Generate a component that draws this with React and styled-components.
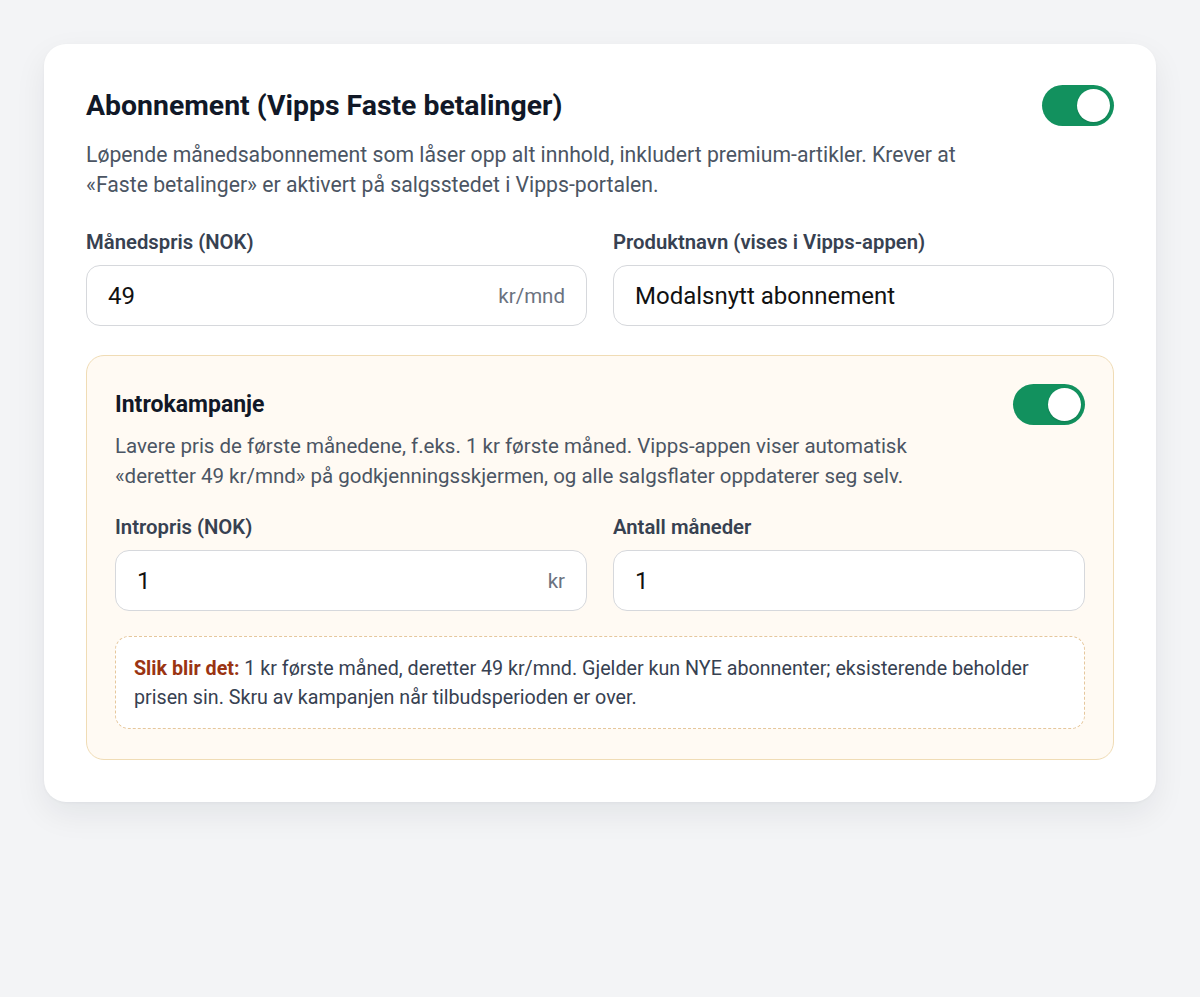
import React, { useState } from "react";
import styled, { createGlobalStyle } from "styled-components";

const Global = createGlobalStyle`
  body {
    margin: 0;
    background: #f3f4f6;
    font-family: Roboto, "Liberation Sans", Arial, sans-serif;
    color: #111827;
  }
  * { box-sizing: border-box; }
`;

function Toggle({ on, onChange }) {
  return (
    <Switch type="button" $on={on} onClick={() => onChange(!on)} aria-pressed={on}>
      <Knob />
    </Switch>
  );
}

function Field({ label, value, suffix }) {
  return (
    <FieldWrap>
      <Label>{label}</Label>
      <InputBox>
        <Input defaultValue={value} />
        {suffix && <Suffix>{suffix}</Suffix>}
      </InputBox>
    </FieldWrap>
  );
}

export default function App() {
  const [sub, setSub] = useState(true);
  const [intro, setIntro] = useState(true);

  return (
    <Page>
      <Global />
      <Card>
        <Header>
          <Title>Abonnement (Vipps Faste betalinger)</Title>
          <Toggle on={sub} onChange={setSub} />
        </Header>
        <Desc>
          Løpende månedsabonnement som låser opp alt innhold, inkludert premium-artikler. Krever at
          «Faste betalinger» er aktivert på salgsstedet i Vipps-portalen.
        </Desc>

        <Grid $top={30}>
          <Field label="Månedspris (NOK)" value="49" suffix="kr/mnd" />
          <Field label="Produktnavn (vises i Vipps-appen)" value="Modalsnytt abonnement" />
        </Grid>

        <Campaign>
          <Header>
            <SubTitle>Introkampanje</SubTitle>
            <Toggle on={intro} onChange={setIntro} />
          </Header>
          <Desc $small>
            Lavere pris de første månedene, f.eks. 1 kr første måned. Vipps-appen viser automatisk
            «deretter 49 kr/mnd» på godkjenningsskjermen, og alle salgsflater oppdaterer seg selv.
          </Desc>

          <Grid $top={23}>
            <Field label="Intropris (NOK)" value="1" suffix="kr" />
            <Field label="Antall måneder" value="1" />
          </Grid>

          <Note>
            <strong>Slik blir det:</strong> 1 kr første måned, deretter 49 kr/mnd. Gjelder kun NYE
            abonnenter; eksisterende beholder prisen sin. Skru av kampanjen når tilbudsperioden er over.
          </Note>
        </Campaign>
      </Card>
    </Page>
  );
}

/* ---------- styles ---------- */

const Page = styled.main`
  min-height: 100vh;
  padding: 44px;
`;

const Card = styled.section`
  background: #fff;
  border-radius: 22px;
  padding: 41px 42px 42px;
  box-shadow: 0 12px 32px rgba(17, 24, 39, 0.07), 0 1px 3px rgba(17, 24, 39, 0.04);
`;

const Header = styled.div`
  display: flex;
  align-items: center;
  justify-content: space-between;
  gap: 24px;
`;

const Title = styled.h2`
  margin: 0;
  font-size: 28.4px;
  line-height: 34px;
  font-weight: 700;
  color: #111827;
`;

const SubTitle = styled.h3`
  margin: 0;
  font-size: 23px;
  line-height: 30px;
  font-weight: 700;
  color: #111827;
`;

const Desc = styled.p`
  margin: ${(p) => (p.$small ? "6px" : "14px")} 0 0;
  max-width: ${(p) => (p.$small ? "850px" : "900px")};
  font-size: ${(p) => (p.$small ? "20.5px" : "21.2px")};
  line-height: ${(p) => (p.$small ? "30px" : "29.5px")};
  color: #4b5563;
`;

const Switch = styled.button`
  flex: 0 0 auto;
  width: 72px;
  height: 41px;
  border: 0;
  padding: 0 4px;
  border-radius: 999px;
  background: ${(p) => (p.$on ? "#12915e" : "#d1d5db")};
  cursor: pointer;
  display: flex;
  align-items: center;
  justify-content: ${(p) => (p.$on ? "flex-end" : "flex-start")};
`;

const Knob = styled.span`
  width: 33px;
  height: 33px;
  border-radius: 50%;
  background: #fff;
  box-shadow: 0 1px 2px rgba(0, 0, 0, 0.15);
`;

const Grid = styled.div`
  display: grid;
  grid-template-columns: 1fr 1fr;
  gap: 26px;
  margin-top: ${(p) => p.$top}px;
`;

const FieldWrap = styled.label`
  display: flex;
  flex-direction: column;
  gap: 10px;
`;

const Label = styled.span`
  font-size: 20.3px;
  line-height: 26px;
  font-weight: 600;
  color: #374151;
`;

const InputBox = styled.div`
  display: flex;
  align-items: center;
  height: 61px;
  border: 1.5px solid #d6d8dc;
  border-radius: 14px;
  background: #fff;
  padding: 0 21px;
`;

const Input = styled.input`
  flex: 1 1 auto;
  min-width: 0;
  border: 0;
  outline: none;
  background: transparent;
  font-family: inherit;
  font-size: 24px;
  color: #111;
  padding: 0;
`;

const Suffix = styled.span`
  font-size: 20.5px;
  color: #6b7280;
`;

const Campaign = styled.div`
  margin-top: 29px;
  background: #fffaf3;
  border: 1.5px solid #f0dcb5;
  border-radius: 18px;
  padding: 28px 28px 30px;
`;

const Note = styled.div`
  margin-top: 25px;
  background: #fff;
  border: 1.5px dashed #e6c79c;
  border-radius: 14px;
  padding: 16.5px 18px;
  font-size: 19.7px;
  line-height: 29px;
  color: #374151;

  strong {
    color: #9a3412;
    font-weight: 700;
  }
`;
